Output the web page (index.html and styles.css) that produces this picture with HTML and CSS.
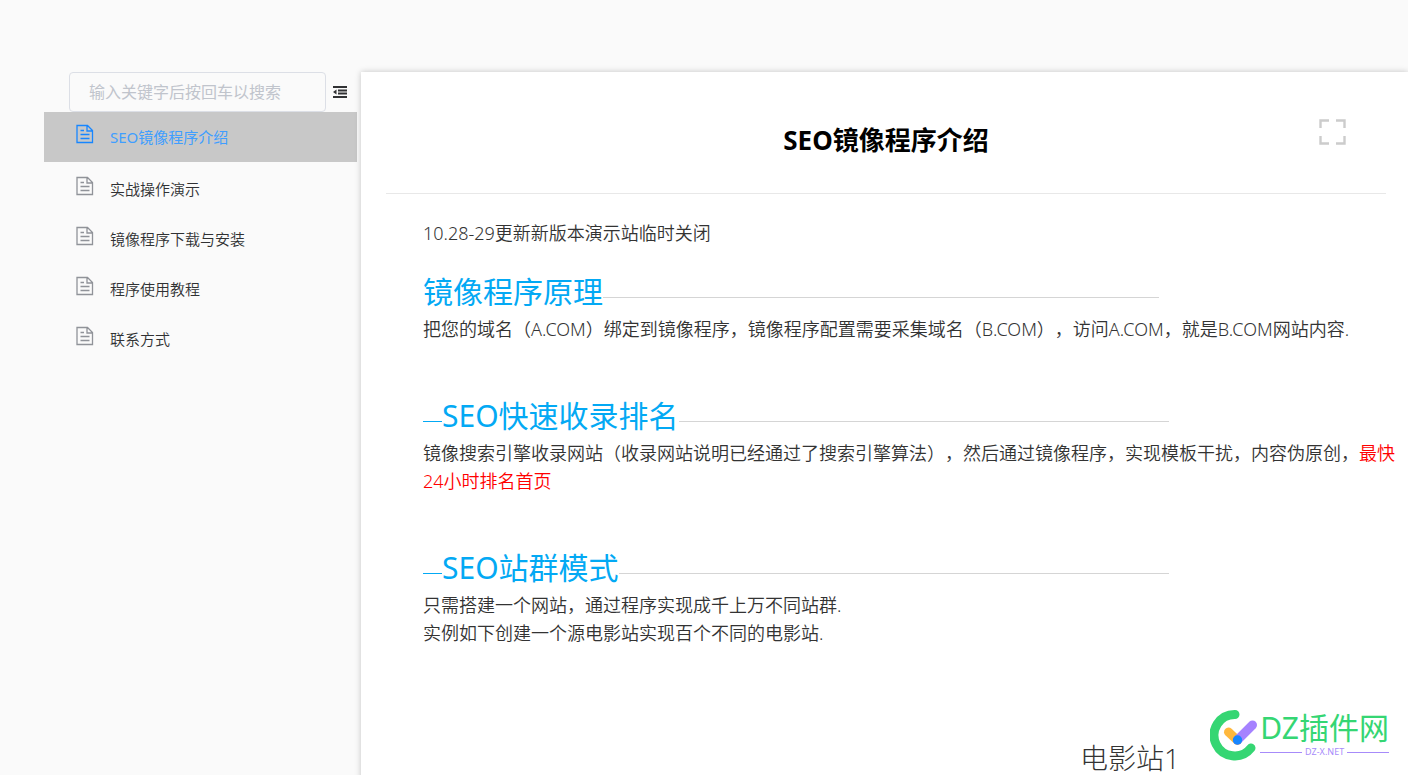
FILE: index.html
```
<!DOCTYPE html>
<html lang="zh-CN">
<head>
<meta charset="utf-8">
<title>SEO镜像程序介绍</title>
<link rel="stylesheet" href="styles.css">
</head>
<body>
<svg class="sprite" aria-hidden="true">
  <symbol id="doc" viewBox="0 0 18 20">
    <path d="M1 1.500h10.500l5 5v12H1zM11 1.500v5.500h5.500M4.500 6.500h3.500M4.500 10.500h9M4.500 14.500h9" fill="none" stroke="currentColor" stroke-width="1.300"/>
  </symbol>
</svg>
<div class="layout">
  <aside class="sidebar">
    <form class="search">
      <input class="search-input" type="text" aria-label="搜索" placeholder="输入关键字后按回车以搜索">
      <button class="fold" type="button" aria-label="收起目录">
        <svg viewBox="0 0 14 12" width="14" height="12"><path d="M0 1h14M5 4.500h9M5 7.500h9M0 11h14" fill="none" stroke="#303133" stroke-width="1.900"/><path d="M0 6l3.500-2.500v5z" fill="#303133"/></svg>
      </button>
    </form>
    <nav class="menu">
      <a class="item active" href="#intro"><svg class="icon"><use href="#doc"/></svg><span>SEO镜像程序介绍</span></a>
      <a class="item" href="#demo"><svg class="icon"><use href="#doc"/></svg><span>实战操作演示</span></a>
      <a class="item" href="#install"><svg class="icon"><use href="#doc"/></svg><span>镜像程序下载与安装</span></a>
      <a class="item" href="#guide"><svg class="icon"><use href="#doc"/></svg><span>程序使用教程</span></a>
      <a class="item" href="#contact"><svg class="icon"><use href="#doc"/></svg><span>联系方式</span></a>
    </nav>
  </aside>
  <main class="page">
    <header class="page-head">
      <h1 class="title">SEO镜像程序介绍</h1>
      <button class="expand" type="button" aria-label="全屏">
        <svg viewBox="0 0 27 26" width="27" height="26"><path d="M1.500 9V1.500H10M17 1.500h8.500V9M1.500 17v7.500H10M17 24.500h8.500V17" fill="none" stroke="#ccc" stroke-width="2.400"/></svg>
      </button>
    </header>
    <article class="content">
      <p class="notice">10.28-29更新新版本演示站临时关闭</p>
      <section class="section">
        <h2 class="heading">镜像程序原理</h2>
        <p>把您的域名（A.COM）绑定到镜像程序，镜像程序配置需要采集域名（B.COM），访问A.COM，就是B.COM网站内容.</p>
      </section>
      <section class="section">
        <h2 class="heading dashed">SEO快速收录排名</h2>
        <p>镜像搜索引擎收录网站（收录网站说明已经通过了搜索引擎算法），然后通过镜像程序，实现模板干扰，内容伪原创，<span class="hot">最快24小时排名首页</span></p>
      </section>
      <section class="section last">
        <h2 class="heading dashed">SEO站群模式</h2>
        <p>只需搭建一个网站，通过程序实现成千上万不同站群.</p>
        <p>实例如下创建一个源电影站实现百个不同的电影站.</p>
      </section>
      <h3 class="site">电影站1</h3>
    </article>
  </main>
</div>
<div class="mark">
  <svg viewBox="0 0 48 52" width="48" height="52">
    <path d="M25 5.500A20.700 20.700 0 1 0 41 39" fill="none" stroke="#35d673" stroke-width="9" stroke-linecap="round"/>
    <path d="M18.500 23l9 8.500" stroke="#ffb83d" stroke-width="9" stroke-linecap="round"/>
    <path d="M42.500 16L27.500 31" stroke="#a582ff" stroke-width="9" stroke-linecap="round"/>
    <circle cx="27.500" cy="31" r="4.700" fill="#1786ff"/>
  </svg>
  <div class="mark-text">
    <span class="mark-name">DZ插件网</span>
    <span class="mark-url">DZ-X.NET</span>
  </div>
</div>
</body>
</html>
```
FILE: styles.css
```
* { box-sizing: border-box; }
body {
  margin: 0;
  background: #fafafa;
  color: #333;
  font-family: "Noto Sans", "Noto Sans CJK SC", sans-serif;
  text-spacing-trim: space-all;
  height: 100vh;
  overflow: hidden;
}
h1, h2, h3, p { margin: 0; font-weight: 350; }
button { border: 0; padding: 0; background: none; display: flex; }
.sprite { position: absolute; width: 0; height: 0; }
.layout { display: flex; align-items: flex-start; padding: 72px 0 0 44px; }
.sidebar { flex: 0 0 313px; margin-right: 4px; }
.search { display: flex; align-items: center; gap: 7px; padding-left: 25px; }
.search-input {
  width: 257px;
  height: 40px;
  padding: 0 19px;
  border: 1px solid #dcdfe6;
  border-radius: 4px;
  background: #fafafa;
  font: 400 16px "Noto Sans", "Noto Sans CJK SC", sans-serif;
}
.search-input::placeholder { color: #c0c4cc; }
.menu { display: flex; flex-direction: column; }
.item {
  display: flex;
  align-items: center;
  gap: 16px;
  height: 50px;
  padding: 0 0 2px 32px;
  color: #303133;
  font-size: 15px;
  font-weight: 350;
  text-decoration: none;
}
.icon { width: 18px; height: 20px; margin-bottom: 4px; color: #909399; }
.active { background: #c8c8c8; color: #409eff; margin-bottom: 2px; font-weight: 400; }
.active .icon { color: #1786ff; }
.page {
  flex: 1;
  min-width: 0;
  min-height: calc(100vh - 72px);
  padding: 0 0 0 25px;
  background: #fff;
  box-shadow: 0 0 6px rgba(0, 0, 0, .22);
}
.page-head {
  display: grid;
  grid-template-columns: 1fr auto 1fr;
  align-items: center;
  height: 122px;
  margin-right: 22px;
  padding: 16px 40px 4px;
  border-bottom: 1px solid #e8e8e8;
}
.title { grid-column: 2; color: #000; font-size: 26px; font-weight: 700; }
.expand { justify-self: end; margin-bottom: 14px; }
.content { padding: 25px 4px 0 37px; font-size: 18px; line-height: 28px; }
.notice { margin-bottom: 24px; }
.section { margin-bottom: 52px; }
.heading {
  display: flex;
  align-items: center;
  width: 75%;
  height: 44px;
  padding-bottom: 2px;
  color: #03a9f4;
  font-size: 30px;
  font-weight: 400;
  line-height: 42px;
}
.heading::after { content: ""; flex: 1; height: 1px; margin-top: 11px; background: #d5d5d5; }
.dashed { width: 76%; }
.dashed::before { content: ""; width: 19px; height: 1px; margin-top: 11px; background: #03a9f4; }
.hot { color: #f00; }
.last { margin-bottom: 88px; }
.site { padding-left: 657px; font: 300 28px/46px "Open Sans", "Noto Sans CJK SC", sans-serif; }
.mark { position: absolute; right: 19px; bottom: 14px; display: flex; align-items: center; gap: 2px; }
.mark-text { display: flex; flex-direction: column; }
.mark-name { color: #35d673; font-size: 30px; line-height: 34px; }
.mark-url { display: flex; align-items: center; gap: 3px; color: #a78bfa; font-size: 9px; line-height: 14px; }
.mark-url::before, .mark-url::after { content: ""; flex: 1; height: 1px; background: #a78bfa; }
```
